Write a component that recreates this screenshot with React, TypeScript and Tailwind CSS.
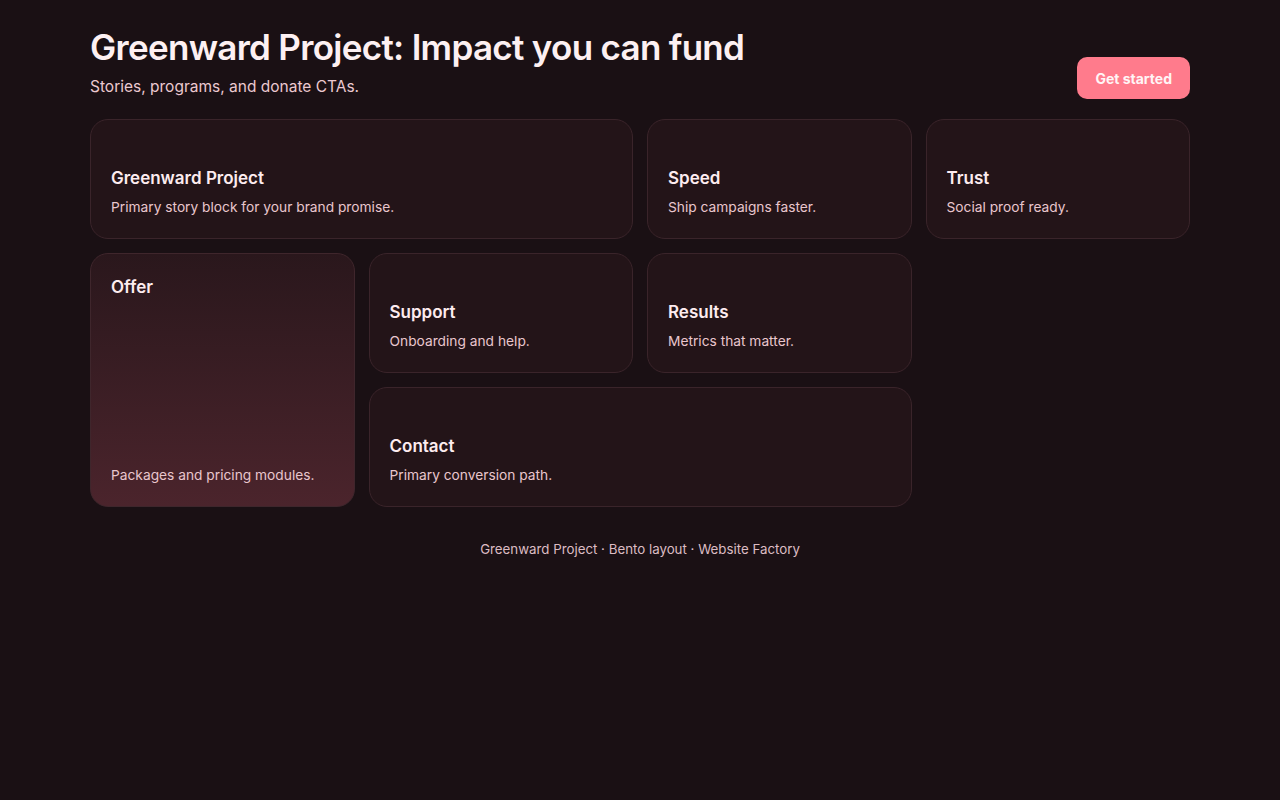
const cardBase =
    "rounded-[18px] border border-[#3a242a] bg-[#231418] px-5 pt-5 pb-[21px] flex flex-col";

function Card({
    title,
    text,
    className = "",
}: {
    title: string;
    text: string;
    className?: string;
}) {
    return (
        <div className={`${cardBase} justify-end ${className}`}>
            <h3 className="text-[17px] leading-[26px] font-semibold text-[#fdecef]">{title}</h3>
            <p className="mt-1.5 text-[13.75px] leading-5 text-[#e9c6cd]">{text}</p>
        </div>
    );
}

export default function App() {
    return (
        <div
            className="min-h-screen bg-[#1a1014] text-[#fdecef]"
            style={{ fontFamily: "Inter, 'Noto Sans', sans-serif" }}
        >
            <div className="mx-auto w-[1100px] pt-[27px] pb-10">
                <header className="flex items-end justify-between">
                    <div>
                        <h1 className="text-[35px] leading-[40px] font-semibold tracking-[-0.02em] text-[#fdf0f2]">
                            Greenward Project: Impact you can fund
                        </h1>
                        <p className="mt-2 text-[15.5px] leading-6 text-[#ecc9d0]">
                            Stories, programs, and donate CTAs.
                        </p>
                    </div>
                    <button className="h-[42px] rounded-[10px] bg-[#ff7b8c] px-[18px] text-[14px] font-bold text-[#fff5f6]">
                        Get started
                    </button>
                </header>

                <main className="mt-5 grid grid-cols-4 grid-rows-[120px_120px_120px] gap-[14px]">
                    <Card
                        className="col-span-2"
                        title="Greenward Project"
                        text="Primary story block for your brand promise."
                    />
                    <Card title="Speed" text="Ship campaigns faster." />
                    <Card title="Trust" text="Social proof ready." />
                    <div className="row-span-2 flex flex-col justify-between rounded-[18px] border border-[#3f262c] bg-gradient-to-b from-[#2a171c] to-[#4b242c] px-5 pt-5 pb-[21px]">
                        <h3 className="text-[17px] leading-[26px] font-semibold text-[#fdecef]">Offer</h3>
                        <p className="text-[13.75px] leading-5 text-[#e9c6cd]">Packages and pricing modules.</p>
                    </div>
                    <Card title="Support" text="Onboarding and help." />
                    <Card title="Results" text="Metrics that matter." />
                    <div className="col-start-4 row-start-2" />
                    <Card
                        className="col-span-2 col-start-2 row-start-3"
                        title="Contact"
                        text="Primary conversion path."
                    />
                </main>

                <footer className="mt-8 text-center text-[13.3px] leading-5 text-[#dcbcc3]">
                    Greenward Project · Bento layout · Website Factory
                </footer>
            </div>
        </div>
    );
}
